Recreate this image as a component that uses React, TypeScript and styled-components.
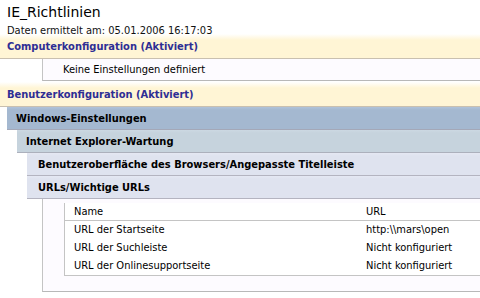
import React from 'react';
import styled, { createGlobalStyle } from 'styled-components';

const GlobalStyle = createGlobalStyle`
  html, body {
    margin: 0;
    padding: 0;
    background: #ffffff;
    overflow: hidden;
  }
  body {
    font-family: "DejaVu Sans Condensed", "DejaVu Sans", sans-serif;
    font-size: 11px;
    color: #000000;
  }
`;

const Page = styled.div`
  width: 480px;
  height: 298px;
  overflow: hidden;
`;

const Title = styled.h1`
  margin: 0;
  padding: 2px 0 0 7px;
  height: 24px;
  font-family: "DejaVu Sans", sans-serif;
  font-size: 14px;
  font-weight: normal;
  line-height: 20px;
  color: #000000;
`;

const Meta = styled.div`
  padding-left: 7px;
  height: 8px;
  line-height: 9px;
  color: #111111;
  position: relative;
  z-index: 1;
`;

const bars = [
  { bg: '#fff5d5', top: '#ffffff', stop: 6, color: '#2e2e94', indent: 0, pad: 7, h: 24, border: '#c9c0b0' },
  { bg: '#a4b8d0', top: '#b0c3d9', stop: 3, color: '#000000', indent: 7, pad: 9, h: 22, border: '#a4a8b8' },
  { bg: '#c6d3dd', top: '#ccd8e2', stop: 3, color: '#000000', indent: 17, pad: 9, h: 22, border: '#acb0bc' },
  { bg: '#dfe3ef', top: '#e5e8f3', stop: 3, color: '#000000', indent: 27, pad: 11, h: 22, border: '#b4b4c0' },
];

const Bar = styled.div<{ $level: number }>`
  margin-left: ${p => bars[p.$level].indent}px;
  padding-left: ${p => bars[p.$level].pad}px;
  height: ${p => bars[p.$level].h}px;
  line-height: ${p => bars[p.$level].h + 1}px;
  background: linear-gradient(
    ${p => bars[p.$level].top},
    ${p => bars[p.$level].bg} ${p => bars[p.$level].stop}px
  );
  border-bottom: 1px solid ${p => bars[p.$level].border};
  color: ${p => bars[p.$level].color};
  font-weight: bold;
  white-space: nowrap;
`;

const Section = styled.section<{ $gap?: boolean }>`
  margin-top: ${p => (p.$gap ? '1px' : '0')};
`;

const Content = styled.div<{ $padded?: boolean }>`
  margin-left: 42px;
  background: #fdfbff;
  border-left: 1px solid #c4c4c4;
  border-bottom: 1px solid #b8b8b8;
  padding: ${p => (p.$padded ? '4px 0 15px 21px' : '0 0 0 20px')};
  height: ${p => (p.$padded ? 'auto' : '21px')};
  line-height: 21px;
`;

const Table = styled.table`
  width: 100%;
  border-collapse: collapse;
  border-left: 1px solid #c4c4c4;
  border-bottom: 1px solid #c4c4c4;
  background: #ffffff;
`;

const HeadCell = styled.th<{ $w?: number }>`
  text-align: left;
  font-weight: normal;
  height: 17px;
  padding: 0 0 0 9px;
  line-height: 17px;
  border-bottom: 1px solid #c4c4c4;
  width: ${p => (p.$w ? `${p.$w}px` : 'auto')};
`;

const Cell = styled.td`
  height: 18px;
  padding: 0 0 0 9px;
  line-height: 18px;
  white-space: nowrap;
`;

const rows = [
  ['URL der Startseite', 'http:\\\\mars\\open'],
  ['URL der Suchleiste', 'Nicht konfiguriert'],
  ['URL der Onlinesupportseite', 'Nicht konfiguriert'],
];

export default function App() {
  return (
    <Page>
      <GlobalStyle />
      <Title>IE_Richtlinien</Title>
      <Meta>Daten ermittelt am: 05.01.2006 16:17:03</Meta>
      <Section>
        <Bar $level={0}>Computerkonfiguration (Aktiviert)</Bar>
        <Content>Keine Einstellungen definiert</Content>
      </Section>
      <Section $gap>
        <Bar $level={0}>Benutzerkonfiguration (Aktiviert)</Bar>
        <Bar $level={1}>Windows-Einstellungen</Bar>
        <Bar $level={2}>Internet Explorer-Wartung</Bar>
        <Bar $level={3}>Benutzeroberfläche des Browsers/Angepasste Titelleiste</Bar>
        <Bar $level={3}>URLs/Wichtige URLs</Bar>
        <Content $padded>
          <Table>
            <thead>
              <tr>
                <HeadCell $w={283}>Name</HeadCell>
                <HeadCell>URL</HeadCell>
              </tr>
            </thead>
            <tbody>
              {rows.map(([name, url]) => (
                <tr key={name}>
                  <Cell>{name}</Cell>
                  <Cell>{url}</Cell>
                </tr>
              ))}
            </tbody>
          </Table>
        </Content>
      </Section>
    </Page>
  );
}
